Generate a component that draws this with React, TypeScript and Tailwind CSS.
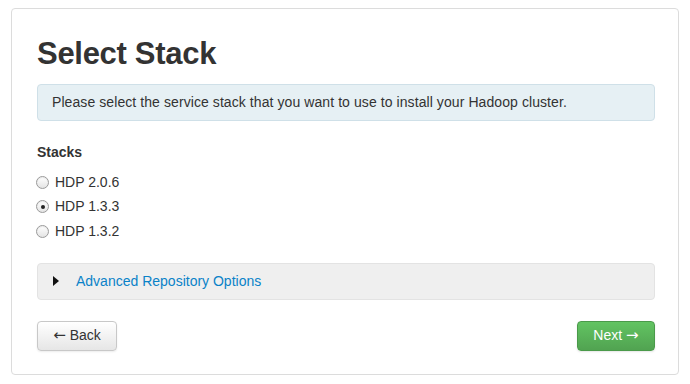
import React, { useState } from "react";

const stacks = ["HDP 2.0.6", "HDP 1.3.3", "HDP 1.3.2"];

export default function App() {
  const [selected, setSelected] = useState("HDP 1.3.3");

  return (
    <div
      className="w-[690px] h-[384px] bg-white pt-[8px] pl-[11px]"
      style={{ fontFamily: '"Liberation Sans", Arial, sans-serif' }}
    >
      <div className="w-[668px] h-[367px] border border-[#dcdcdc] rounded-[4px] pl-[25px] pr-[23px] pt-[24px] text-[#333]">
        {/* Titulo */}
        <h1 className="text-[31px] font-bold leading-[42px] tracking-[-0.3px] text-[#333]">
          Select Stack
        </h1>

        {/* Aviso */}
        <div className="mt-[9px] h-[37px] flex items-center px-[14px] bg-[#e6f0f4] border border-[#cfe0e8] rounded-[4px] text-[14px] tracking-[0.08px]">
          Please select the service stack that you want to use to install your Hadoop cluster.
        </div>

        {/* Stacks */}
        <div className="mt-[21px] text-[14px] font-bold leading-[20px]">Stacks</div>
        <div className="mt-[8px] flex flex-col">
          {stacks.map((s) => (
            <label key={s} className="flex items-center h-[24.5px] text-[14px] cursor-pointer">
              <span className="w-[13px] h-[13px] rounded-full border border-[#9a9a9a] bg-gradient-to-b from-white to-[#e4e4e4] flex items-center justify-center shadow-[inset_0_1px_1px_rgba(0,0,0,0.08)] ml-[-1px]">
                {selected === s && <span className="w-[4px] h-[4px] rounded-full bg-[#222]" />}
              </span>
              <input
                type="radio"
                className="hidden"
                checked={selected === s}
                onChange={() => setSelected(s)}
              />
              <span className="ml-[6px]">{s}</span>
            </label>
          ))}
        </div>

        {/* Opciones avanzadas */}
        <div className="mt-[19px] h-[37px] flex items-center bg-[#efefef] border border-[#e3e3e3] rounded-[4px] pl-[15px]">
          <svg width="6" height="10" viewBox="0 0 6 10" className="text-[#111]">
            <path d="M0 0 L6 5 L0 10 Z" fill="currentColor" />
          </svg>
          <a href="#" className="ml-[17px] text-[14px] text-[#0a82c8]">
            Advanced Repository Options
          </a>
        </div>

        {/* Botones */}
        <div className="mt-[21px] flex justify-between">
          <button className="w-[80px] h-[30px] text-[14px] text-[#333] border border-[#c8c8c8] rounded-[4px] bg-gradient-to-b from-white to-[#e6e6e6] shadow-[0_1px_2px_rgba(0,0,0,0.08)] flex items-center justify-center gap-[4px]">
            <span style={{ fontFamily: '"DejaVu Sans", sans-serif' }} className="text-[15px] leading-none">←</span>
            <span>Back</span>
          </button>
          <button className="w-[78px] h-[30px] text-[14px] text-white border border-[#4a9a4a] rounded-[4px] bg-gradient-to-b from-[#62c462] to-[#51a351] shadow-[0_1px_2px_rgba(0,0,0,0.1)] flex items-center justify-center gap-[4px]">
            <span>Next</span>
            <span style={{ fontFamily: '"DejaVu Sans", sans-serif' }} className="text-[15px] leading-none">→</span>
          </button>
        </div>
      </div>
    </div>
  );
}
